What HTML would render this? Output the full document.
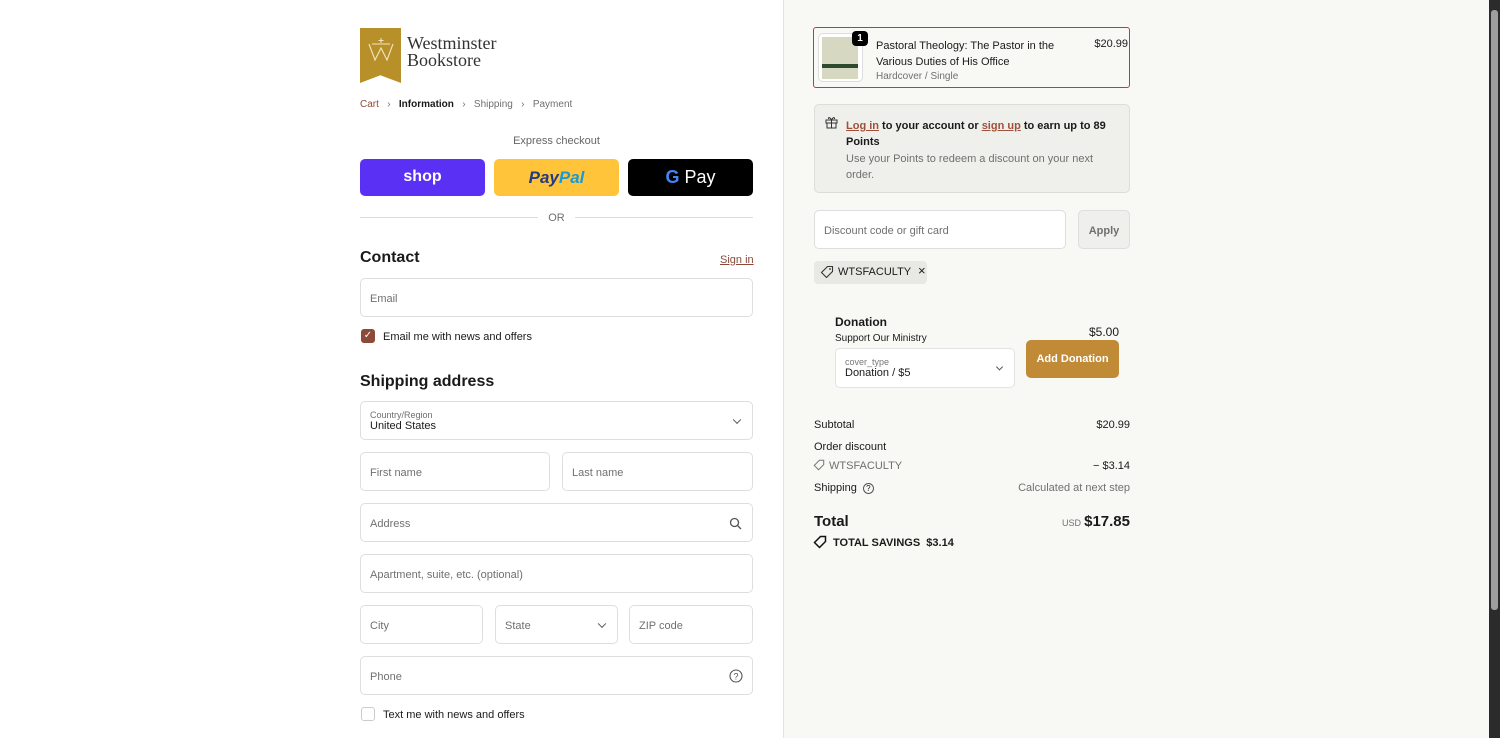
<!DOCTYPE html>
<html><head><meta charset="utf-8">
<style>
*{box-sizing:border-box;margin:0;padding:0}
body{width:1500px;height:738px;overflow:hidden;font-family:"Liberation Sans",sans-serif;color:#1a1a1a;background:#fff;position:relative;font-size:11px}
.right{position:absolute;left:783px;top:0;width:706px;height:738px;background:#f8f8f5;border-left:1px solid #e3e3e3}
.sb{position:absolute;left:1489px;top:0;width:11px;height:738px;background:#2b2b2b}
.sb i{position:absolute;left:2px;top:10px;width:7px;height:600px;background:#9e9e9e;border-radius:3px}
.a{position:absolute;white-space:nowrap}
.inp{position:absolute;border:1px solid #dedede;border-radius:5px;background:#fff;color:#707070;font-size:11px;padding-left:9px;padding-top:2px;display:flex;align-items:center}
.chev{position:absolute;right:12px;top:50%;width:6px;height:6px;border-right:1.3px solid #555;border-bottom:1.3px solid #555;transform:translateY(-70%) rotate(45deg)}
.row{position:absolute;left:814px;width:316px;display:flex;justify-content:space-between;font-size:11px}
</style></head><body>
<div class="a" style="left:360px;top:28px;width:41px;height:55px;background:#b8902a;clip-path:polygon(0 0,100% 0,100% 100%,50% 86%,0 100%)"></div>
<svg class="a" style="left:366px;top:36px" width="30" height="30" viewBox="0 0 30 30"><path d="M3 8 L9 24 L15 12 L21 24 L27 8" fill="none" stroke="#f2e6c0" stroke-width="1.1"/><path d="M6 8 L24 8" stroke="#f2e6c0" stroke-width="1"/><path d="M15 2 L15 7 M12.5 4.5 L17.5 4.5" stroke="#f2e6c0" stroke-width="1"/></svg>
<div class="a" style="left:407px;top:35px;font-family:'Liberation Serif',serif;font-size:18px;line-height:17px;color:#333">Westminster<br>Bookstore</div>
<div class="a" style="left:360px;top:99px;font-size:10px;color:#707070"><span style="color:#8b4a3a">Cart</span> &nbsp;&nbsp;›&nbsp;&nbsp; <span style="color:#1a1a1a;font-weight:bold">Information</span> &nbsp;&nbsp;›&nbsp;&nbsp; Shipping &nbsp;&nbsp;›&nbsp;&nbsp; Payment</div>
<div class="a" style="left:360px;top:135px;width:393px;text-align:center;color:#666;font-size:11px">Express checkout</div>
<div class="a" style="left:360px;top:159px;width:125px;height:37px;background:#5a31f4;border-radius:5px;color:#fff;font-weight:bold;font-size:16px;text-align:center;line-height:36px">shop</div>
<div class="a" style="left:494px;top:159px;width:125px;height:37px;background:#ffc439;border-radius:5px;text-align:center;line-height:37px;font-weight:bold;font-style:italic;font-size:17px"><span style="color:#253b80">Pay</span><span style="color:#179bd7">Pal</span></div>
<div class="a" style="left:628px;top:159px;width:125px;height:37px;background:#000;border-radius:5px;text-align:center;line-height:37px;color:#fff;font-size:18px"><b style="color:#4285f4">G</b> Pay</div>
<div class="a" style="left:360px;top:217px;width:178px;border-top:1px solid #ddd"></div>
<div class="a" style="left:575px;top:217px;width:178px;border-top:1px solid #ddd"></div>
<div class="a" style="left:540px;top:212px;width:33px;text-align:center;color:#707070">OR</div>
<div class="a" style="left:360px;top:249px;font-size:16px;font-weight:bold">Contact</div>
<div class="a" style="left:720px;top:254px;color:#8b4a3a;text-decoration:underline">Sign in</div>
<div class="inp" style="left:360px;top:278px;width:393px;height:39px">Email</div>
<div class="a" style="left:361px;top:329px;width:14px;height:14px;background:#8b4a3a;border-radius:3px;color:#fff;font-size:10px;text-align:center;line-height:14px">✓</div>
<div class="a" style="left:383px;top:331px">Email me with news and offers</div>
<div class="a" style="left:360px;top:373px;font-size:16px;font-weight:bold">Shipping address</div>
<div class="inp" style="left:360px;top:401px;width:393px;height:39px;display:block;padding-top:8px"><div style="font-size:9px">Country/Region</div><div style="color:#1a1a1a">United States</div><span class="chev"></span></div>
<div class="inp" style="left:360px;top:452px;width:190px;height:39px">First name</div>
<div class="inp" style="left:562px;top:452px;width:191px;height:39px">Last name</div>
<div class="inp" style="left:360px;top:503px;width:393px;height:39px">Address<svg style="position:absolute;right:10px;top:13px" width="13" height="13" viewBox="0 0 13 13"><circle cx="5.5" cy="5.5" r="4" fill="none" stroke="#555" stroke-width="1.3"/><path d="M8.5 8.5 L12 12" stroke="#555" stroke-width="1.3"/></svg></div>
<div class="inp" style="left:360px;top:554px;width:393px;height:39px">Apartment, suite, etc. (optional)</div>
<div class="inp" style="left:360px;top:605px;width:123px;height:39px">City</div>
<div class="inp" style="left:495px;top:605px;width:123px;height:39px">State<span class="chev"></span></div>
<div class="inp" style="left:629px;top:605px;width:124px;height:39px">ZIP code</div>
<div class="inp" style="left:360px;top:656px;width:393px;height:39px">Phone<svg style="position:absolute;right:9px;top:12px" width="14" height="14" viewBox="0 0 14 14"><circle cx="7" cy="7" r="6" fill="none" stroke="#555" stroke-width="1.1"/><text x="7" y="10.5" font-size="9" text-anchor="middle" fill="#555" font-family="Liberation Sans">?</text></svg></div>
<div class="a" style="left:361px;top:707px;width:14px;height:14px;border:1px solid #ccc;border-radius:3px"></div>
<div class="a" style="left:383px;top:709px">Text me with news and offers</div>

<div class="right"></div>
<div class="sb"><i></i></div>
<div class="a" style="left:813px;top:27px;width:317px;height:61px;border:1.5px solid #b0452f;border-radius:3px;background:#f8f8f5"></div>
<div class="a" style="left:818px;top:33px;width:45px;height:49px;border:1px solid #ddd;border-radius:5px;background:#fff"></div>
<div class="a" style="left:822px;top:37px;width:36px;height:42px;background:#d6d8c2"><div style="margin-top:27px;height:4px;background:#2e4a2e"></div></div>
<div class="a" style="left:852px;top:31px;width:16px;height:15px;background:#000;color:#fff;border-radius:4px;font-size:10px;font-weight:bold;text-align:center;line-height:15px">1</div>
<div class="a" style="left:876px;top:38px;line-height:16px">Pastoral Theology: The Pastor in the<br>Various Duties of His Office</div>
<div class="a" style="left:876px;top:71px;font-size:10px;color:#707070">Hardcover / Single</div>
<div class="a" style="left:1060px;top:38px;width:68px;text-align:right">$20.99</div>
<div class="a" style="left:814px;top:104px;width:316px;height:89px;background:#efefec;border:1px solid #dcdcd8;border-radius:5px"></div>
<svg class="a" style="left:825px;top:116px" width="13" height="13" viewBox="0 0 13 13" fill="none" stroke="#333" stroke-width="1"><rect x="1" y="4" width="11" height="3"/><rect x="2" y="7" width="9" height="5"/><path d="M6.5 4v8M6.5 4C5 1 3 1 3.5 3M6.5 4C8 1 10 1 9.5 3"/></svg>
<div class="a" style="left:846px;top:118px;line-height:16px;font-weight:bold;width:275px;white-space:normal"><span style="color:#a0503a;text-decoration:underline">Log in</span> to your account or <span style="color:#a0503a;text-decoration:underline">sign up</span> to earn up to 89 Points</div>
<div class="a" style="left:846px;top:151px;line-height:16px;color:#707070;width:275px;white-space:normal">Use your Points to redeem a discount on your next order.</div>
<div class="inp" style="left:814px;top:210px;width:252px;height:39px">Discount code or gift card</div>
<div class="a" style="left:1078px;top:210px;width:52px;height:39px;border:1px solid #dedede;border-radius:5px;background:#efefec;color:#707070;text-align:center;line-height:40px;font-weight:bold">Apply</div>
<div class="a" style="left:814px;top:261px;width:113px;height:23px;background:#e8e8e4;border-radius:4px;padding:5px 0 0 24px">WTSFACULTY <span style="margin-left:4px;font-size:13px;line-height:10px">×</span></div>
<svg class="a" style="left:820px;top:265px" width="14" height="14" viewBox="0 0 14 14"><path d="M7.5 1.5H12.5V6.5L6.5 12.5L1.5 7.5Z" fill="none" stroke="#333" stroke-width="1.1"/><circle cx="10" cy="4" r="0.9" fill="#333"/></svg>
<div class="a" style="left:835px;top:315px;font-size:12px;font-weight:bold">Donation</div>
<div class="a" style="left:835px;top:333px;font-size:10px">Support Our Ministry</div>
<div class="a" style="left:835px;top:348px;width:180px;height:40px;background:#fff;border:1px solid #e3e3e3;border-radius:5px;padding:8px 0 0 9px"><div style="font-size:9px;color:#777">cover_type</div><div style="font-size:11px">Donation / $5</div><span class="chev" style="width:5px;height:5px"></span></div>
<div class="a" style="left:1089px;top:325px;font-size:12px">$5.00</div>
<div class="a" style="left:1026px;top:340px;width:93px;height:38px;background:#c08a36;border-radius:5px;color:#fff;font-weight:bold;text-align:center;line-height:38px">Add Donation</div>
<div class="row" style="top:419px"><span>Subtotal</span><span>$20.99</span></div>
<div class="row" style="top:441px"><span>Order discount</span></div>
<div class="row" style="top:460px;color:#707070"><span style="padding-left:15px">WTSFACULTY</span><span style="color:#1a1a1a">− $3.14</span></div>
<svg class="a" style="left:813px;top:459px" width="12" height="12" viewBox="0 0 14 14"><path d="M7.5 1.5H12.5V6.5L6.5 12.5L1.5 7.5Z" fill="none" stroke="#777" stroke-width="1.2"/></svg>
<div class="row" style="top:482px"><span>Shipping <span style="display:inline-block;width:11px;height:11px;border:1px solid #555;border-radius:50%;font-size:8px;text-align:center;line-height:10px;margin-left:3px">?</span></span><span style="color:#707070">Calculated at next step</span></div>
<div class="row" style="top:513px;align-items:baseline"><span style="font-size:15px;font-weight:bold">Total</span><span><span style="font-size:9px;color:#707070">USD</span> <b style="font-size:15px">$17.85</b></span></div>
<svg class="a" style="left:813px;top:535px" width="14" height="14" viewBox="0 0 14 14"><path d="M7.5 1.5H12.5V6.5L6.5 12.5L1.5 7.5Z" fill="none" stroke="#111" stroke-width="1.5"/></svg>
<div class="a" style="left:833px;top:537px;font-weight:bold">TOTAL SAVINGS &nbsp;$3.14</div>
</body></html>
